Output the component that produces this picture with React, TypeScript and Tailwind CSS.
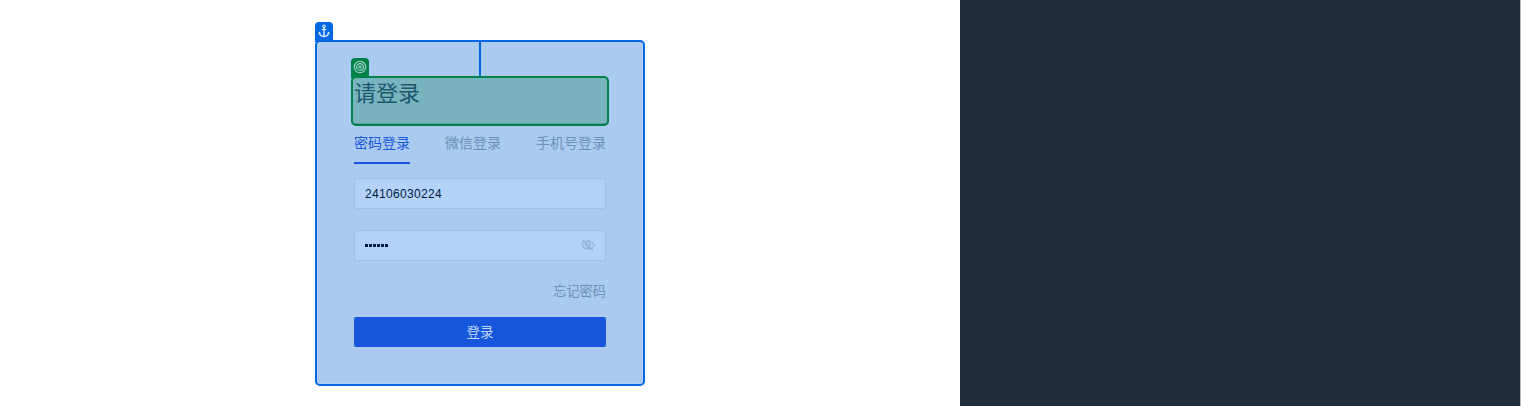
import type { ReactNode } from 'react';

const font = "font-['Liberation_Sans','Noto_Sans_CJK_SC',sans-serif]";

function AnchorIcon() {
  return (
    <svg width="14" height="14" viewBox="0 0 14 14" fill="none" stroke="#d9e9fb" strokeWidth="1.1">
      <circle cx="7" cy="2.3" r="1.3" />
      <path d="M4.5 5.5h5" />
      <path d="M7 3.6V12.5" strokeWidth="1.5" />
      <path d="M2.2 8.6C2.5 11 4.3 12.3 7 12.5C9.7 12.3 11.5 11 11.8 8.6" strokeWidth="1.3" />
      <path d="M1.4 10L2.1 7.6L4.2 9.2ZM12.6 10L11.9 7.6L9.8 9.2Z" fill="#d9e9fb" stroke="none" />
    </svg>
  );
}

function TargetIcon() {
  return (
    <svg width="14" height="14" viewBox="0 0 14 14" fill="none" stroke="#a9d3cf" strokeWidth="1.1">
      <circle cx="7" cy="7" r="5.7" />
      <circle cx="7" cy="7" r="3.4" />
      <circle cx="7" cy="7" r="1.2" />
    </svg>
  );
}

function EyeOffIcon() {
  return (
    <svg className="-mt-0.5" width="14" height="14" viewBox="0 0 14 14" fill="none" stroke="#89a9d4" strokeWidth="1">
      <path d="M.8 7C2.3 4.2 4.4 2.9 7 2.9S11.7 4.2 13.2 7C11.7 9.8 9.6 11.1 7 11.1S2.3 9.8 .8 7Z" />
      <path d="M5.2 5.2a2.5 2.5 0 0 0 3.6 3.6M6.8 4.5a2.5 2.5 0 0 1 2.7 2.7" />
      <path d="M2.4 1.2L13 11.8" stroke="#b4d2f8" strokeWidth="0.7" />
      <path d="M1.6 1.8L12.2 12.4" strokeWidth="1.2" />
    </svg>
  );
}

function Field({ children }: { children: ReactNode }) {
  return (
    <div className="flex h-[31px] w-[252px] items-center justify-between rounded-[3px] border border-[#9fbfe7] bg-[#b4d2f8] px-[10px] text-[#001c46]">
      {children}
    </div>
  );
}

export default function App() {
  return (
    <div className={`flex h-[406px] w-[1521px] overflow-hidden bg-white ${font}`}>
      <main className="w-[960px] pt-10 pl-[315px]">
        <section className="relative flex h-[346px] w-[330px] flex-col rounded-[5px] border-2 border-[#0067e2] bg-[#aacaf0] px-[34px] shadow-[inset_0_0_0_1px_#b2d0f5]">
          <div className="absolute -top-5 -left-0.5 flex h-5 w-[18px] items-center justify-center rounded-t-[4px] bg-[#0067e2] pb-0.5">
            <AnchorIcon />
          </div>
          <div className="mx-auto h-[34px] w-0.5 shrink-0 bg-[#0067e2]" />
          <div className="relative h-[50px] w-[258px] shrink-0 rounded-[5px] border-2 border-[#00834a] bg-[#79b3be] pl-px shadow-[inset_0_-1px_0_#5b9ba3]">
            <div className="absolute -top-5 -left-0.5 flex h-5 w-[18px] items-center justify-center rounded-t-[4px] bg-[#00834a] pb-0.5">
              <TargetIcon />
            </div>
            <h1 className="text-[22px] leading-8 text-[#1d586d]">请登录</h1>
          </div>
          <div className="flex flex-col px-[3px]">
            <nav className="flex h-[38px] justify-between text-sm text-[#6f8fb9]">
              <span className="border-b-2 border-[#1757dc] pt-[7px] text-[#1757dc]">密码登录</span>
              <span className="pt-[7px]">微信登录</span>
              <span className="pt-[7px]">手机号登录</span>
            </nav>
            <div className="mt-[14px]">
              <Field>
                <span className="text-xs tracking-[0.33px]">24106030224</span>
              </Field>
            </div>
            <div className="mt-[21px]">
              <Field>
                <span className="flex gap-px">
                  {[0, 1, 2, 3, 4, 5].map((n) => (
                    <i key={n} className="size-[3px] bg-[#001c46]" />
                  ))}
                </span>
                <EyeOffIcon />
              </Field>
            </div>
            <div className="mt-[21px] h-5 text-right text-[13.2px] leading-5 text-[#6f8fb9]">忘记密码</div>
            <button className="mt-[15px] h-[30px] rounded-[2px] bg-[#1757dc] pt-px text-[13.5px] leading-[30px] text-[#bdd7fa]">登录</button>
          </div>
        </section>
      </main>
      <aside className="w-[560px] bg-[#222b38]" />
      <div className="w-px bg-[#b7bbbf]" />
    </div>
  );
}
